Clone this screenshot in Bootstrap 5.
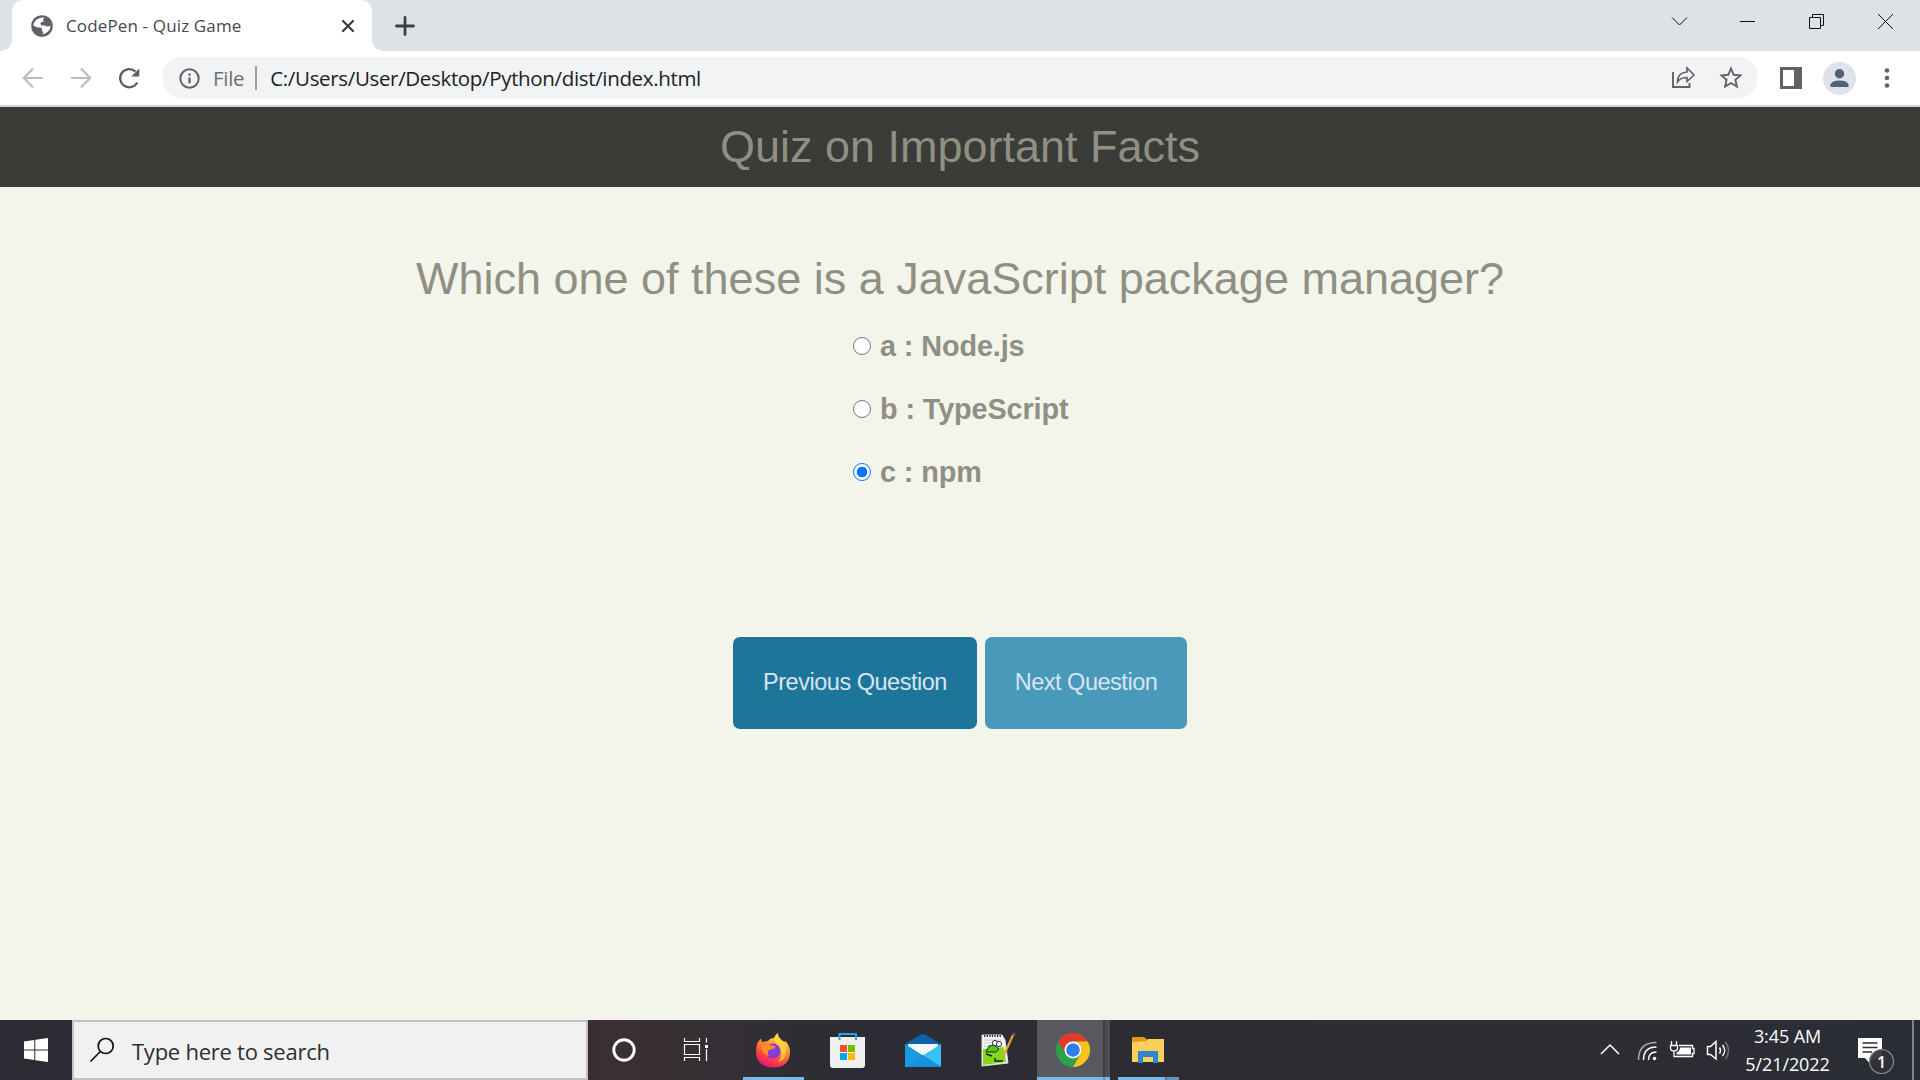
<!DOCTYPE html>
<html lang="en">
<head>
<meta charset="utf-8">
<title>CodePen - Quiz Game</title>
<link href="https://cdn.jsdelivr.net/npm/bootstrap@5.3.0/dist/css/bootstrap.min.css" rel="stylesheet">
<style>
html,body{height:100%;overflow:hidden}
body{width:1920px;height:1080px;font-family:"Open Sans","Noto Sans",sans-serif;background:#f3f4ea}
svg{display:block;flex:none;overflow:visible}
.tabstrip{height:51px;background:#dee1e6}
.browser-tab{width:360px;height:51px;margin-left:12px;background:#fff;border-radius:11px 11px 0 0;padding:0 18px 0 19px;position:relative}
.browser-tab::before,.browser-tab::after{content:"";position:absolute;bottom:0;width:11px;height:11px}
.browser-tab::before{left:-11px;background:radial-gradient(circle at 0 0,transparent 10.5px,#fff 11px)}
.browser-tab::after{right:-11px;background:radial-gradient(circle at 100% 0,transparent 10.5px,#fff 11px)}
.tab-title{font-size:17px;letter-spacing:.14px;color:#45494d;line-height:24px;margin-left:13px;white-space:nowrap}
.new-tab{margin-left:24px}
.window-controls{margin-bottom:7px}
.toolbar-row{height:56px;background:#fff;border-bottom:2px solid #d5d8da}
.omnibox{width:1596px;height:42px;border-radius:21px;background:#f1f3f4;font-size:20.5px;line-height:30px}
.info-icon{margin-left:17px}
.scheme{color:#6c7075;margin-left:13px;letter-spacing:-.3px}
.sep{width:2px;height:24px;background:#9b9fa3;margin:0 13px 0 11px}
.address{color:#202124;letter-spacing:-.34px}
.quiz-page{height:913px;font-family:"Liberation Sans",Arial,sans-serif;color:#8f8f83}
.quiz-head{height:80px;background:#3b3b37}
.quiz-head h1,.quiz-q{font-size:45px;line-height:52px;font-weight:400;color:#8f8f83}
.quiz-q{margin-top:66px}
.answers{width:214px;margin-top:9px}
.answers label{height:63px;font-size:28.8px;font-weight:700;white-space:pre;letter-spacing:-.1px}
.answers label span{padding-top:2px}
.answers input{appearance:none;width:18px;height:18px;margin:1px 9px 0 0;border:1.5px solid #767676;border-radius:50%;background:#fff;flex:none}
.answers input:checked{border-color:#0075ff;background:radial-gradient(circle,#0075ff 5px,#fff 5.6px)}
.quiz-actions{margin-top:134px}
.quiz-btn{height:92px;border:0;border-radius:7px;font-size:23.5px;letter-spacing:-.48px;color:#d9e3f3;padding:0}
.quiz-btn.prev{width:244px;background:#1d7699}
.quiz-btn.next{width:202px;background:#4999ba}
.taskbar{height:60px;background:linear-gradient(90deg,#2c2b34 0,#30282e 490px,#3a2f34 610px,#332f34 740px,#2c2c34 850px,#2d2c33 1200px,#2e2d32 1550px,#2c2d35 1730px,#2b2d36 100%)}
.search-box{width:516px;height:60px;background:#f1f1f1;border:2px solid #c2c2c2;font-size:22px;color:#2e2e2e;padding-left:16px}
.search-box span{margin-left:18px;padding-top:2px;letter-spacing:-.25px}
.task-slot{width:76px;height:60px;display:flex;align-items:center;justify-content:center;flex:none}
.slot-72{width:72px}
.slot-firefox{width:74px;background:linear-gradient(#76b9ed,#76b9ed) 7px 57px/61px 3px no-repeat}
.slot-store{width:75px}
.slot-notes{padding-right:3px}
.slot-chrome{width:73px;padding-right:2px;background:linear-gradient(90deg,#76b9ed 66px,#5f94be 66px 68px,#76b9ed 68px) 0 57px/73px 3px no-repeat,linear-gradient(90deg,#58585e 66px,#3e3e43 66px 68px,#4c4c51 68px)}
.slot-files{background:linear-gradient(90deg,#76b9ed 47px,#4e7797 47px 49px,#6296bf 49px) 8px 57px/61px 3px no-repeat}
.clock-text{width:107px;font-size:18px;letter-spacing:-.1px;line-height:28px;color:#fff;white-space:nowrap;text-align:center}
</style>
<script src="https://cdn.jsdelivr.net/npm/bootstrap@5.3.0/dist/js/bootstrap.bundle.min.js"></script>
</head>
<body class="d-flex flex-column m-0">
<header>
 <div class="tabstrip d-flex align-items-center">
  <div class="browser-tab d-flex align-items-center">
   <svg width="22" height="22" viewBox="0 0 22 22"><circle cx="11" cy="11" r="10.8" fill="#5f6368"/><path d="M11 2.400L13.500 2.800Q11 5 12.800 7H10.300Q8.500 9 10.800 10.500H14Q16 12.600 19.600 10.500Q19.300 17.500 11 19.600Q13.500 17.300 10.800 15.700Q12 13 9 12.500Q5.500 13 2.400 10.500Q3 4 11 2.400Z" fill="#fff"/></svg>
   <span class="tab-title">CodePen - Quiz Game</span>
   <svg class="ms-auto" width="12" height="12" viewBox="0 0 12 12" stroke="#3c4043" stroke-width="2.300" stroke-linecap="round"><path d="M1 1L11 11M11 1L1 11"/></svg>
  </div>
  <svg class="new-tab" width="18" height="18" viewBox="0 0 18 18"><path d="M9 0.500V17.500M.5 9H17.500" stroke="#3c4043" stroke-width="2.800" stroke-linecap="round"/></svg>
  <svg class="window-controls ms-auto" width="248" height="20" viewBox="1672 12 248 20" fill="none" stroke="#111" stroke-width="1"><path d="M1672 17.500L1679.500 25L1687 17.500M1740 21.500H1755"/><path d="M1809.500 17.500H1820.500V28.500H1809.500ZM1812.500 17V14.500H1823.500V25.500H1821M1878 14L1893 29M1893 14L1878 29"/></svg>
 </div>
 <div class="toolbar-row d-flex align-items-center">
  <svg width="162" height="42" viewBox="0 57 162 42" fill="none" stroke-width="2.200"><path d="M43 78H24M33 68.500L23.800 78L33 87.500M71 78H90M81 68.500L90.200 78L81 87.500" stroke="#bbbdc0"/><path d="M137.300 82.500A9.100 9.100 0 1 1 135.500 71.500" stroke="#5b5f64" stroke-width="2.300"/><path d="M139.300 68.500V76.500H131.300Z" fill="#5b5f64"/></svg>
  <div class="omnibox d-flex align-items-center">
   <svg class="info-icon" width="21" height="21" viewBox="0 0 21 21"><circle cx="10.500" cy="10.500" r="9.200" fill="none" stroke="#5f6368" stroke-width="2"/><path d="M10.500 9.500V15.300M10.500 5.500V7.800" stroke="#5f6368" stroke-width="2.300"/></svg>
   <span class="scheme">File</span><span class="sep"></span><span class="address">C:/Users/User/Desktop/Python/dist/index.html</span>
   <svg class="ms-auto" width="87" height="30" viewBox="1671 64 87 30" fill="none" stroke="#5f6368" stroke-width="1.900"><path d="M1673 73V88H1689.500V84"/><path d="M1677.500 83Q1677.500 73.500 1687 73V69L1694 76L1687 82.500V78.500Q1680.500 78.500 1677.500 83Z" stroke-width="1.600"/><path d="M1731 69.500L1733.700 75.800L1740.500 76.400L1735.400 80.900L1736.900 87.600L1731 84L1725.100 87.600L1726.600 80.900L1721.500 76.400L1728.300 75.800Z"/></svg>
  </div>
  <svg width="162" height="42" viewBox="1758 57 162 42"><path d="M1780 67h22v22h-22Z M1783 70v16h11v-16Z" fill="#5f6368" fill-rule="evenodd"/><circle cx="1839.500" cy="78.500" r="16.500" fill="#dfe2e8"/><circle cx="1839.500" cy="73.800" r="4.700" fill="#535f78"/><path d="M1830.500 87V84.500Q1832 80.500 1839.500 80.500T1848.500 84.500V87Z" fill="#535f78"/><g fill="#5f6368"><circle cx="1887" cy="70.500" r="2.300"/><circle cx="1887" cy="78" r="2.300"/><circle cx="1887" cy="85.500" r="2.300"/></g></svg>
 </div>
</header>
<main class="quiz-page d-flex flex-column align-items-center">
 <div class="quiz-head w-100 d-flex align-items-center justify-content-center"><h1 class="m-0">Quiz on Important Facts</h1></div>
 <h2 class="quiz-q mb-0">Which one of these is a JavaScript package manager?</h2>
 <form class="answers">
  <label class="d-flex align-items-center"><input type="radio" name="q"><span>a : Node.js</span></label>
  <label class="d-flex align-items-center"><input type="radio" name="q"><span>b : TypeScript</span></label>
  <label class="d-flex align-items-center"><input type="radio" name="q" checked><span>c : npm</span></label>
 </form>
 <div class="quiz-actions d-flex gap-2"><button class="btn quiz-btn prev">Previous Question</button><button class="btn quiz-btn next">Next Question</button></div>
</main>
<footer class="taskbar d-flex align-items-center">
 <div class="task-slot slot-72"><svg width="24" height="24" viewBox="0 0 24 24" fill="#fff"><path d="M0 3.400L10.300 2V11.400H0ZM11.300 1.800L24 0V11.400H11.300ZM0 12.500H10.300V22L0 20.600ZM11.300 12.500H24V24L11.300 22.200Z"/></svg></div>
 <div class="search-box d-flex align-items-center"><svg width="24" height="24" viewBox="0 0 24 24" fill="none" stroke="#111" stroke-width="1.700"><circle cx="15.700" cy="8" r="7.500"/><path d="M10.300 13.500L.5 23.500"/></svg><span>Type here to search</span></div>
 <div class="task-slot slot-72"><svg width="24" height="24"><circle cx="12" cy="12" r="10.200" fill="none" stroke="#fff" stroke-width="2.900"/></svg></div>
 <div class="task-slot"><svg class="me-1" width="24" height="24" fill="none" stroke="#fff" stroke-width="1.200"><path d="M.5 0V3.500H15.500V0M.5 6.500H15.500V16.500H.5ZM.5 23V19.500H15.500V23M22.500 0V4.500M22.500 11V23"/><path d="M21 7h3v3h-3z" fill="#fff" stroke="none"/></svg></div>
 <div class="task-slot slot-firefox">
  <svg width="34" height="35" viewBox="0 0 34 35"><defs><linearGradient id="fx" x1=".8" y1="0" x2=".35" y2="1"><stop offset="0" stop-color="#fff44f"/><stop offset=".35" stop-color="#ffa436"/><stop offset=".7" stop-color="#ff4b3e"/><stop offset="1" stop-color="#e91578"/></linearGradient><radialGradient id="fp"><stop offset="0" stop-color="#6a4fe0"/><stop offset="1" stop-color="#9433d1"/></radialGradient></defs><path d="M22 0Q21.500 4 26 7.500Q29 9.500 29.500 8Q34 13 34 19Q33.500 34.500 17 34.500Q0 34 0 18Q0 10 5 5.500L6 9L12 8Q14 5 18 5Q19 2 22 0Z" fill="url(#fx)"/><path d="M22 0Q21.500 4 26 7.500Q31 12 30 20Q29 28 22 29Q28 23 23 14Q19 10 18 6Q19 2 22 0Z" fill="#ffd83d" opacity=".8"/><circle cx="17" cy="18" r="7.500" fill="url(#fp)"/><path d="M5 12Q9 8.500 13 11.500L20 13.500Q18 16.500 14 16.500Q10 19 13 23Q8 22 6 17Z" fill="#ff8a27"/></svg></div>
 <div class="task-slot slot-store"><svg width="35" height="35" viewBox="0 0 35 35"><path d="M0 4H35V32Q35 35 32 35H3Q0 35 0 32Z" fill="#efefef"/><path d="M9.500 7V1H26V7" fill="none" stroke="#1ea9e1" stroke-width="2"/><path d="M10 12h7v7h-7z" fill="#f25022"/><path d="M18 12h7v7h-7z" fill="#7fba00"/><path d="M10 20h7v7h-7z" fill="#00a4ef"/><path d="M18 20h7v7h-7z" fill="#ffb900"/></svg></div>
 <div class="task-slot"><svg width="36" height="33" viewBox="0 0 36 33"><path d="M0 10L15 1Q18-1 21 1L36 10V14H0Z" fill="#0f5faa"/><path d="M3 10H33V21H3Z" fill="#f5f6f7"/><path d="M0 10L36 33H0Z" fill="#199be2"/><path d="M36 10V33L18 21.500Z" fill="#36c5f2"/><path d="M0 33L18 21.500L36 33Z" fill="#1692df"/></svg></div>
 <div class="task-slot slot-notes"><svg width="34" height="34" viewBox="0 0 34 34"><path d="M1 2H21L24 7L27 30L1 33Z" fill="#f4f6f6" stroke="#ddd"/><path d="M2 16L23 14L25 29L2 32Z" fill="#87d51c"/><path d="M3 3H20" stroke="#333" stroke-width="2" stroke-dasharray="1.300 1.300"/><path d="M3 7H20M3 10H21M3 13H21" stroke="#b9cddd"/><path d="M5 19L8 13L13 12L18 16L15 19H8Z" fill="#54c522" stroke="#173010"/><circle cx="14" cy="10" r="2.600" fill="#fff" stroke="#333"/><circle cx="18" cy="11" r="2.600" fill="#fff" stroke="#333"/><path d="M5 21L11 23M14 25V28H22" stroke="#14300c" stroke-width="1.500" fill="none"/><path d="M32 2L22.500 23" stroke="#e8a62b" stroke-width="2.200"/><path d="M33.500 0L32.300 2.700" stroke="#b44" stroke-width="2.200"/></svg></div>
 <div class="task-slot slot-chrome">
  <svg width="34" height="34" viewBox="0 0 34 34"><circle cx="17" cy="17" r="17" fill="#2aa24c"/><path d="M2.300 8.500A17 17 0 0 1 31.700 8.500H17A8.500 8.500 0 0 0 9.600 21.300Z" fill="#e5392d"/><path d="M31.700 8.500A17 17 0 0 1 17 34L24.400 21.200A8.500 8.500 0 0 0 17 8.500Z" fill="#fdc21a"/><circle cx="17" cy="17" r="8.500" fill="#fff"/><circle cx="17" cy="17" r="6.800" fill="#2f7cee"/></svg></div>
 <div class="task-slot slot-files"><svg width="32" height="26" viewBox="0 0 32 26"><path d="M0 1Q0 0 1 0H12L15 2.500V8H0Z" fill="#dc9d0b"/><path d="M0 5L14 4L16 2H32V25H0Z" fill="#fbd05a"/><path d="M6 26V14H26V26H21V20H11V26Z" fill="#2f86cf"/></svg></div>
 <div class="ms-auto d-flex align-items-center">
  <svg width="134" height="28" viewBox="1600 1036 134 28" fill="none" stroke="#fff" stroke-width="1.500"><path d="M1601 1054L1610 1045L1619 1054" stroke-width="1.500"/><path d="M1638.500 1060Q1638.500 1042.500 1656.500 1042.500" stroke="#aaa"/><path d="M1643.500 1060Q1643.500 1047 1656.500 1047M1648.500 1060Q1648.500 1052 1656.500 1052"/><circle cx="1654.500" cy="1058.500" r="1.800" fill="#fff" stroke="none"/><path d="M1679 1045.500H1692.500V1048.500H1694V1053.500H1692.500V1056.500H1674V1052M1671.500 1041V1045M1676.500 1041V1045M1670.500 1045.500H1677.500V1048Q1677.500 1051 1674 1051Q1670.500 1051 1670.500 1048Z" stroke-width="1.300"/><path d="M1680 1047.500H1691V1054.500H1676.500V1052.500Q1680 1051 1680 1047.500Z" fill="#fff" stroke="none"/><path d="M1707.500 1046.500H1710.500L1716 1041.500V1059L1710.500 1054.500H1707.500Z"/><path d="M1719.500 1047.500Q1721.500 1050.500 1719.500 1053.500M1722.500 1045Q1727 1050.500 1722.500 1056"/><path d="M1725.500 1042Q1731.500 1050.500 1725.500 1059" stroke="#777"/></svg>
  <div class="clock-text">3:45 AM<br>5/21/2022</div>
  <svg width="79" height="60" viewBox="1841 1020 79 60"><path d="M1858 1038H1882V1058H1874L1869 1062.500L1865 1058H1858Z" fill="#fff"/><path d="M1862.500 1043H1877.500M1862.500 1047.500H1877.500M1862.500 1052H1872" stroke="#2b2d35" stroke-width="1.400"/><circle cx="1881.500" cy="1061.500" r="12" fill="#303137" fill-opacity=".93" stroke="#8a8a8d" stroke-width="1.200"/><text x="1881.500" y="1067.500" text-anchor="middle" fill="#fff" font-size="16" font-weight="600" font-family="Open Sans, sans-serif">1</text><path d="M1913 1020V1080" stroke="#828386" stroke-width="2"/></svg>
 </div>
</footer>
</body>
</html>
